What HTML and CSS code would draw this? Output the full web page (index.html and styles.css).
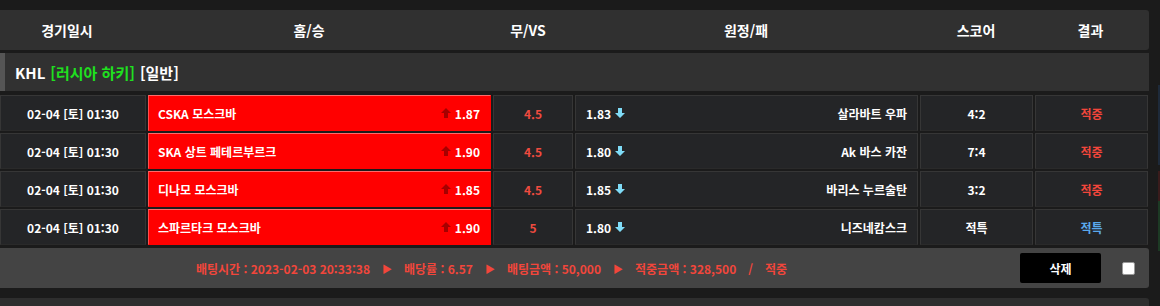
FILE: index.html
```html
<!DOCTYPE html>
<html lang="ko">
<head>
<meta charset="utf-8">
<link rel="stylesheet" href="styles.css">
</head>
<body>
<div class="page">
  <div class="board">
    <div class="thead">
      <div class="th">경기일시</div>
      <div class="th">홈/승</div>
      <div class="th">무/VS</div>
      <div class="th">원정/패</div>
      <div class="th">스코어</div>
      <div class="th">결과</div>
    </div>
    <div class="league">KHL <span class="green">[러시아 하키]</span> [일반]</div>
    <div class="rows">
      <div class="row">
        <div class="cell date">02-04 [토] 01:30</div>
        <div class="cell home"><span>CSKA 모스크바</span><span class="odd"><svg class="up" viewBox="0 0 10 10"><path d="M5 0 L10 5 L7 5 L7 10 L3 10 L3 5 L0 5 Z"/></svg>1.87</span></div>
        <div class="cell draw">4.5</div>
        <div class="cell away"><span class="odd">1.83<svg class="down" viewBox="0 0 10 10"><path d="M3 0 L7 0 L7 5 L10 5 L5 10 L0 5 L3 5 Z"/></svg></span><span>살라바트 우파</span></div>
        <div class="cell score">4:2</div>
        <div class="cell res hit">적중</div>
      </div>
      <div class="row">
        <div class="cell date">02-04 [토] 01:30</div>
        <div class="cell home"><span>SKA 상트 페테르부르크</span><span class="odd"><svg class="up" viewBox="0 0 10 10"><path d="M5 0 L10 5 L7 5 L7 10 L3 10 L3 5 L0 5 Z"/></svg>1.90</span></div>
        <div class="cell draw">4.5</div>
        <div class="cell away"><span class="odd">1.80<svg class="down" viewBox="0 0 10 10"><path d="M3 0 L7 0 L7 5 L10 5 L5 10 L0 5 L3 5 Z"/></svg></span><span>Ak 바스 카잔</span></div>
        <div class="cell score">7:4</div>
        <div class="cell res hit">적중</div>
      </div>
      <div class="row">
        <div class="cell date">02-04 [토] 01:30</div>
        <div class="cell home"><span>디나모 모스크바</span><span class="odd"><svg class="up" viewBox="0 0 10 10"><path d="M5 0 L10 5 L7 5 L7 10 L3 10 L3 5 L0 5 Z"/></svg>1.85</span></div>
        <div class="cell draw">4.5</div>
        <div class="cell away"><span class="odd">1.85<svg class="down" viewBox="0 0 10 10"><path d="M3 0 L7 0 L7 5 L10 5 L5 10 L0 5 L3 5 Z"/></svg></span><span>바리스 누르술탄</span></div>
        <div class="cell score">3:2</div>
        <div class="cell res hit">적중</div>
      </div>
      <div class="row">
        <div class="cell date">02-04 [토] 01:30</div>
        <div class="cell home"><span>스파르타크 모스크바</span><span class="odd"><svg class="up" viewBox="0 0 10 10"><path d="M5 0 L10 5 L7 5 L7 10 L3 10 L3 5 L0 5 Z"/></svg>1.90</span></div>
        <div class="cell draw">5</div>
        <div class="cell away"><span class="odd">1.80<svg class="down" viewBox="0 0 10 10"><path d="M3 0 L7 0 L7 5 L10 5 L5 10 L0 5 L3 5 Z"/></svg></span><span>니즈네캄스크</span></div>
        <div class="cell score">적특</div>
        <div class="cell res special">적특</div>
      </div>
    </div>
    <div class="footer">
      <div class="summary">
        <span>배팅시간 : 2023-02-03 20:33:38</span>
        <span class="tri">▶</span>
        <span>배당률 : 6.57</span>
        <span class="tri">▶</span>
        <span>배팅금액 : 50,000</span>
        <span class="tri">▶</span>
        <span>적중금액 : 328,500</span>
        <span class="slash">/</span>
        <span>적중</span>
      </div>
      <button class="del">삭제</button>
      <span class="check"></span>
    </div>
    <div class="next"></div>
  </div>
  <div class="side">
    <div class="s1"></div>
    <div class="s2"></div>
    <div class="s3"></div>
  </div>
</div>
</body>
</html>
```

FILE: styles.css
```css
* { box-sizing: border-box; }
html, body { margin: 0; padding: 0; }
body {
  background: #1b1b1b;
  font-family: "Noto Sans CJK KR", "Noto Sans", sans-serif;
  color: #fff;
  width: 1160px;
  height: 306px;
  overflow: hidden;
}
.page {
  display: flex;
  padding-top: 10px;
}
.board {
  width: 1149px;
  display: flex;
  flex-direction: column;
}
.thead {
  height: 40px;
  background: #303030;
  border-radius: 0 3px 3px 0;
  display: grid;
  grid-template-columns: 134px 350px 88px 348px 112px 117px;
  align-items: center;
  font-size: 14px;
  font-weight: 700;
}
.th { text-align: center; line-height: 40px; }
.league {
  margin-top: 3px;
  height: 38px;
  background: #313131;
  border-left: 5px solid #555;
  padding-left: 10px;
  display: flex;
  align-items: center;
  gap: 5px;
  font-size: 15px;
  font-weight: 700;
}
.green { color: #1fe01f; }
.rows {
  margin-top: 4px;
  display: flex;
  flex-direction: column;
  gap: 2px;
}
.row {
  display: grid;
  grid-template-columns: 146px 343px 80px 343px 113px 113px;
  column-gap: 2px;
  height: 36px;
}
.cell {
  background: #242527;
  border: 1px solid #363636;
  border-bottom-color: #2a2a2a;
  display: flex;
  align-items: center;
  font-size: 12px;
  font-weight: 700;
}
.date { justify-content: center; }
.home {
  background: #ff0000;
  border: 1px solid #ff0000;
  border-top-color: #ff6a6a;
  border-left-color: #ff5050;
  justify-content: space-between;
  padding: 0 10px 0 9px;
}
.odd { display: flex; align-items: center; gap: 4px; }
.up { width: 10px; height: 10px; fill: #a60000; }
.down { width: 10px; height: 10px; fill: #7fdcf7; }
.draw { justify-content: center; color: #ef4b3f; }
.away { justify-content: space-between; padding: 0 10px 0 10px; }
.score { justify-content: center; }
.res { justify-content: center; }
.hit { color: #f2463b; }
.special { color: #5aa9ec; }
.footer {
  margin-top: 3px;
  height: 40px;
  background: #444;
  border-radius: 0 3px 3px 0;
  display: flex;
  align-items: center;
  padding-left: 196px;
}
.summary {
  display: flex;
  align-items: center;
  gap: 8px;
  color: #f2463b;
  font-size: 12px;
  font-weight: 700;
  width: 824px;
}
.tri { font-size: 10px; margin: 0 4px; }
.slash { margin: 0 4px; }
.del {
  width: 81px;
  height: 30px;
  background: #000;
  color: #fff;
  border: none;
  border-radius: 2px;
  font-family: inherit;
  font-size: 12px;
  font-weight: 700;
}
.check {
  margin-left: 21px;
  width: 13px;
  height: 13px;
  background: #fff;
  border: 1px solid #999;
  border-radius: 2px;
}
.next {
  margin-top: 10px;
  height: 20px;
  background: #2e2e2e;
  border-radius: 0 3px 0 0;
}
.side {
  margin-left: 9px;
  width: 2px;
  display: flex;
  flex-direction: column;
  padding-top: 75px;
}
.s1 { height: 80px; background: #1e2a3a; }
.s2 { height: 30px; margin-top: 6px; background: #3a1c1c; }
.s3 { height: 50px; background: #1d3a24; }
```
